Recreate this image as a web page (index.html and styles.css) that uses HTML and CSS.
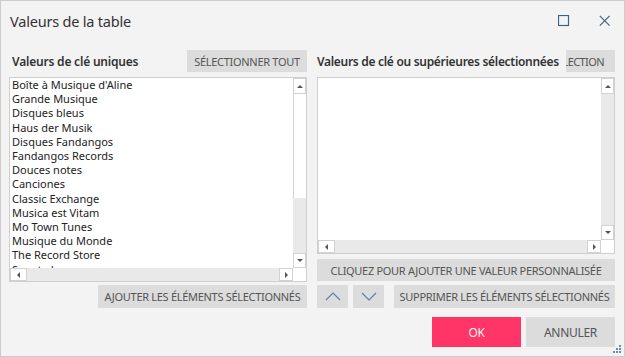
FILE: index.html
```html
<!DOCTYPE html>
<html lang="fr">
<head>
<meta charset="utf-8">
<title>Valeurs de la table</title>
<link rel="stylesheet" href="styles.css">
</head>
<body>
<div class="window">
  <div class="titlebar">
    <div class="title">Valeurs de la table</div>
    <div class="winbtns">
      <svg class="wicon" width="12" height="12" viewBox="0 0 12 12"><rect x="0.5" y="0.5" width="10" height="10" fill="none" stroke="#3e6287" stroke-width="1.2"/></svg>
      <svg class="wicon" width="12" height="12" viewBox="0 0 12 12"><path d="M0.8 0.8 L10.6 10.6 M10.6 0.8 L0.8 10.6" stroke="#3e6287" stroke-width="1.2" fill="none"/></svg>
    </div>
  </div>
  <div class="cols">
    <div class="col">
      <div class="head">
        <span class="label">Valeurs de clé uniques</span>
        <button class="btn btn-head">SÉLECTIONNER TOUT</button>
      </div>
      <div class="listbox list-left">
        <div class="items">
          <div>Boîte à Musique d'Aline</div>
          <div>Grande Musique</div>
          <div>Disques bleus</div>
          <div>Haus der Musik</div>
          <div>Disques Fandangos</div>
          <div>Fandangos Records</div>
          <div>Douces notes</div>
          <div>Canciones</div>
          <div>Classic Exchange</div>
          <div>Musica est Vitam</div>
          <div>Mo Town Tunes</div>
          <div>Musique du Monde</div>
          <div>The Record Store</div>
          <div>Sonata Lounge</div>
        </div>
        <div class="vscroll">
          <div class="arrow up"><span class="tri tri-up"></span></div>
          <div class="thumb"></div>
          <div class="track"></div>
          <div class="arrow down"><span class="tri tri-down"></span></div>
        </div>
        <div class="hscroll">
          <div class="harrow left"><span class="tri tri-left"></span></div>
          <div class="htrack"></div>
          <div class="harrow right"><span class="tri tri-right"></span></div>
        </div>
        <div class="corner"></div>
      </div>
      <div class="row-end">
        <button class="btn btn-add">AJOUTER LES ÉLÉMENTS SÉLECTIONNÉS</button>
      </div>
    </div>
    <div class="col">
      <div class="head">
        <span class="label label-right">Valeurs de clé ou supérieures sélectionnées</span>
        <button class="btn btn-clip"><span>EFFACER LA SÉLECTION</span></button>
      </div>
      <div class="listbox list-right">
        <div class="items"></div>
        <div class="vscroll">
          <div class="arrow up"><span class="tri tri-up"></span></div>
          <div class="track"></div>
          <div class="arrow down"><span class="tri tri-down"></span></div>
        </div>
        <div class="hscroll">
          <div class="harrow left"><span class="tri tri-left"></span></div>
          <div class="htrack"></div>
          <div class="harrow right"><span class="tri tri-right"></span></div>
        </div>
        <div class="corner"></div>
      </div>
      <button class="btn btn-wide">CLIQUEZ POUR AJOUTER UNE VALEUR PERSONNALISÉE</button>
      <div class="row-tools">
        <button class="btn btn-icon" aria-label="Monter"><svg width="16" height="9" viewBox="0 0 16 9"><path d="M1 8 L8 1 L15 8" fill="none" stroke="#5b7fa3" stroke-width="1.1"/></svg></button>
        <button class="btn btn-icon" aria-label="Descendre"><svg width="16" height="9" viewBox="0 0 16 9"><path d="M1 1 L8 8 L15 1" fill="none" stroke="#5b7fa3" stroke-width="1.1"/></svg></button>
        <button class="btn btn-remove">SUPPRIMER LES ÉLÉMENTS SÉLECTIONNÉS</button>
      </div>
      <div class="row-dialog">
        <button class="btn btn-ok">OK</button>
        <button class="btn btn-cancel">ANNULER</button>
      </div>
    </div>
  </div>
  <svg class="grip" width="9" height="9" viewBox="0 0 9 9">
    <rect x="7" y="1" width="2" height="2" fill="#6f8aa6"/>
    <rect x="4" y="4" width="2" height="2" fill="#6f8aa6"/>
    <rect x="7" y="4" width="2" height="2" fill="#6f8aa6"/>
    <rect x="1" y="7" width="2" height="2" fill="#6f8aa6"/>
    <rect x="4" y="7" width="2" height="2" fill="#6f8aa6"/>
    <rect x="7" y="7" width="2" height="2" fill="#6f8aa6"/>
  </svg>
</div>
</body>
</html>
```

FILE: styles.css
```css
* { box-sizing: border-box; }
html, body { margin: 0; padding: 0; background: #ffffff; }
body { font-family: "Noto Sans", "Open Sans", sans-serif; color: #333; }

.window {
  position: relative;
  width: 625px;
  height: 357px;
  border: 1px solid #cbcbcb;
  background: #f3f3f3;
  padding: 0 9px 0 8px;
  display: flex;
  flex-direction: column;
}

.titlebar {
  height: 39px;
  display: flex;
  align-items: center;
  justify-content: space-between;
  padding-left: 1px;
}
.title { font-size: 14.5px; color: #333; letter-spacing: -0.2px; }
.winbtns { display: flex; gap: 29px; align-items: center; padding-right: 4px; }
.wicon { display: block; }

.cols {
  margin-top: 10px;
  display: grid;
  grid-template-columns: 298px 298px;
  column-gap: 10px;
}
.col { display: flex; flex-direction: column; }

.head {
  height: 22px;
  display: flex;
  align-items: center;
  justify-content: space-between;
  margin-bottom: 5px;
}
.label { font-size: 12px; font-weight: 600; color: #333; padding-left: 3px; letter-spacing: -0.2px; }
.label-right { padding-left: 0; letter-spacing: -0.3px; position: relative; z-index: 1; }

.btn {
  border: none;
  background: #dcdcdc;
  color: #555;
  font-family: inherit;
  font-size: 11px;
  letter-spacing: -0.3px;
  padding: 0;
  margin: 0;
  display: flex;
  align-items: center;
  justify-content: center;
  white-space: nowrap;
}
.btn-head { width: 120px; height: 22px; }
.btn-clip {
  width: 49px; height: 22px;
  flex-shrink: 0;
  overflow: hidden;
  justify-content: flex-end;
  padding-right: 11px;
  letter-spacing: -0.6px;
}
.btn-clip span { flex-shrink: 0; }

.listbox {
  border: 1px solid #cfcfcf;
  background: #fff;
  display: grid;
  grid-template-columns: 1fr 13px;
  grid-template-rows: 1fr 13px;
}
.list-left { height: 205px; }
.list-right { height: 177px; }

.items {
  overflow: hidden;
  padding: 0 0 0 2px;
  font-size: 11px;
  line-height: 14.2px;
  color: #222;
  white-space: nowrap;
}

.vscroll { display: flex; flex-direction: column; background: #e9e9e9; }
.arrow {
  background: #fff;
  border: 1px solid #d2d2d2;
  display: flex;
  align-items: center;
  justify-content: center;
}
.arrow.up { height: 16px; }
.arrow.down { height: 15px; }
.thumb { height: 104px; background: #fff; border-left: 1px solid #d2d2d2; }
.track { flex: 1; }

.hscroll { display: flex; background: #e9e9e9; }
.harrow {
  background: #fff;
  border: 1px solid #d2d2d2;
  display: flex;
  align-items: center;
  justify-content: center;
}
.harrow.left { width: 17px; }
.harrow.right { width: 14px; }
.htrack { flex: 1; }
.corner { background: #fff; }

.tri { width: 0; height: 0; display: block; }
.tri-up { border-left: 3px solid transparent; border-right: 3px solid transparent; border-bottom: 3px solid #555; }
.tri-down { border-left: 3px solid transparent; border-right: 3px solid transparent; border-top: 3px solid #555; }
.tri-left { border-top: 3px solid transparent; border-bottom: 3px solid transparent; border-right: 3px solid #555; }
.tri-right { border-top: 3px solid transparent; border-bottom: 3px solid transparent; border-left: 3px solid #555; }

.row-end { display: flex; justify-content: flex-end; margin-top: 3px; }
.btn-add { width: 209px; height: 23px; }

.btn-wide { height: 22px; margin-top: 5px; width: 100%; }
.row-tools { display: flex; margin-top: 4px; height: 23px; }
.btn-icon { width: 31px; height: 23px; margin-right: 5px; }
.btn-remove { margin-left: 5px; flex: 1; height: 23px; }

.row-dialog { display: flex; justify-content: flex-end; gap: 5px; margin-top: 9px; }
.btn-ok { width: 89px; height: 30px; background: #ff3567; color: #fff2f5; font-size: 12px; }
.btn-cancel { width: 89px; height: 30px; font-size: 12px; }

.grip { position: absolute; right: 3px; bottom: 3px; }
```
